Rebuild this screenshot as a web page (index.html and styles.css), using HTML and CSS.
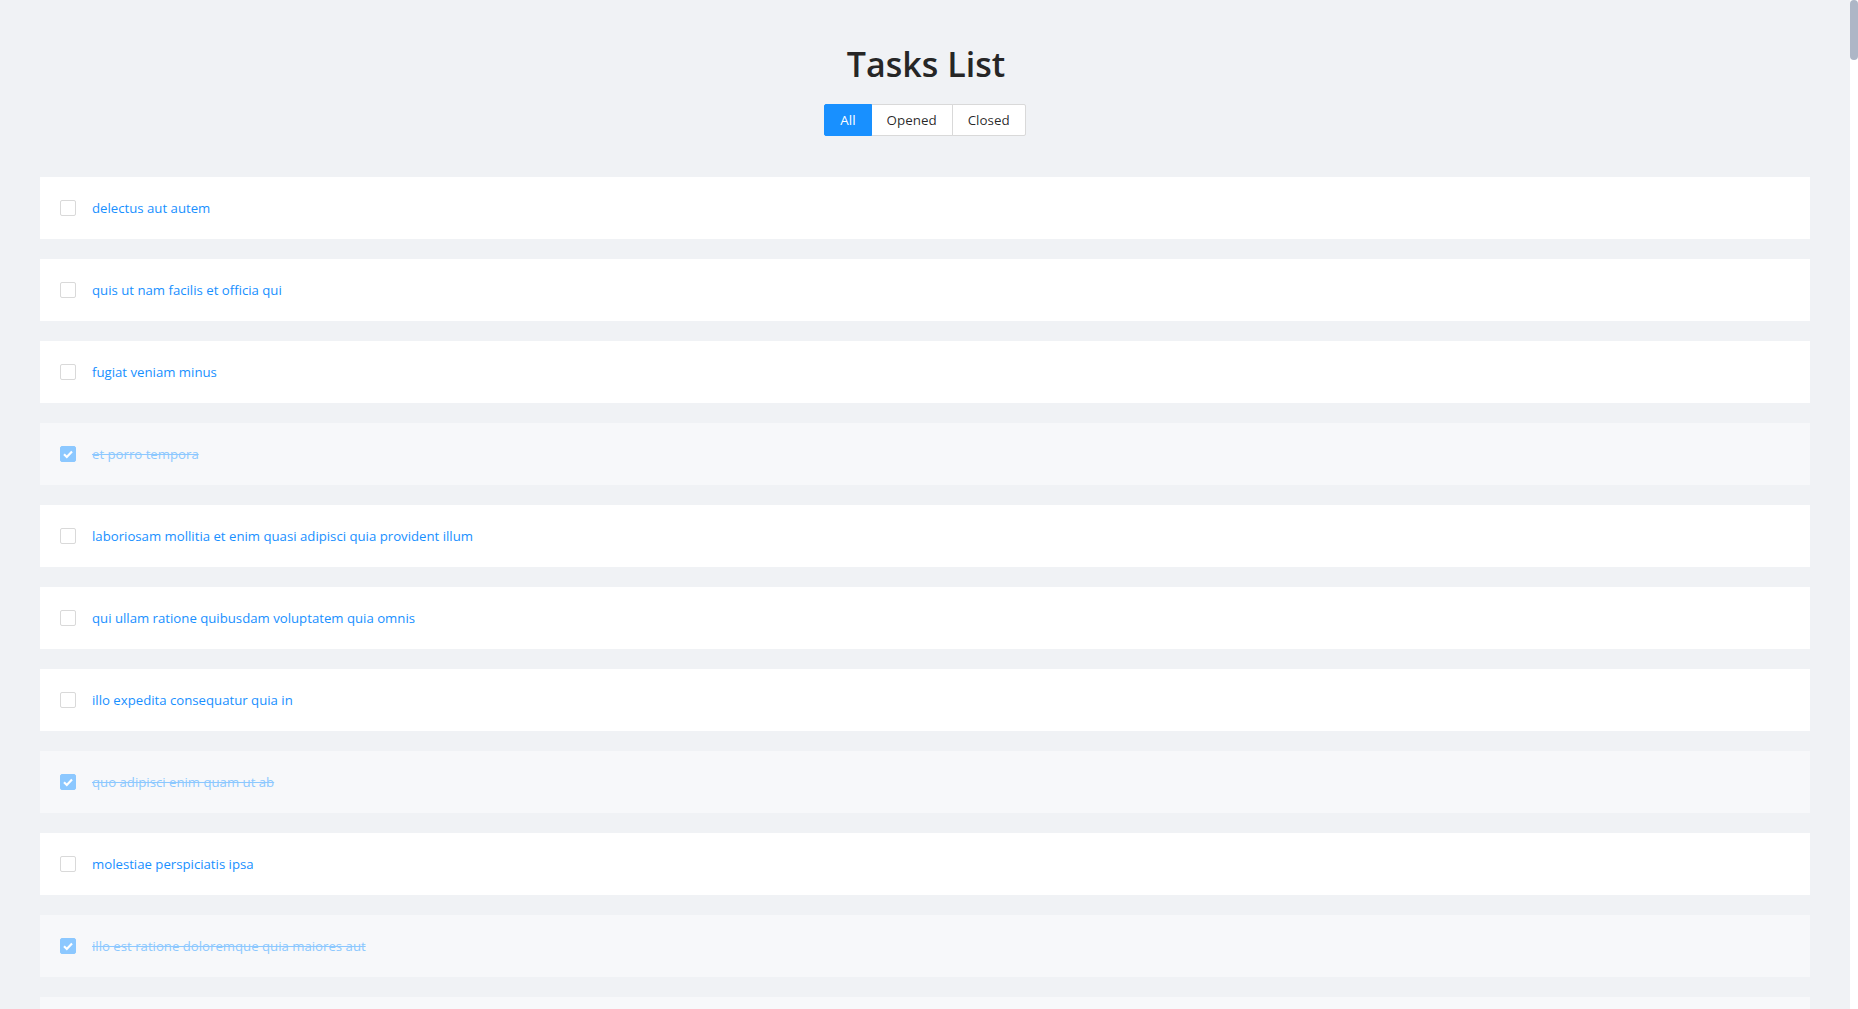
FILE: index.html
```html
<!DOCTYPE html>
<html lang="en">
<head>
<meta charset="utf-8">
<title>Tasks List</title>
<link rel="stylesheet" href="styles.css">
</head>
<body>
<div class="page">
  <header class="header">
    <h1 class="title">Tasks List</h1>
    <div class="filters">
      <button class="filter active">All</button>
      <button class="filter">Opened</button>
      <button class="filter">Closed</button>
    </div>
  </header>
  <ul class="tasks">
    <li class="task"><span class="box"></span><span class="label">delectus aut autem</span></li>
    <li class="task"><span class="box"></span><span class="label">quis ut nam facilis et officia qui</span></li>
    <li class="task"><span class="box"></span><span class="label">fugiat veniam minus</span></li>
    <li class="task done"><span class="box"><svg viewBox="0 0 16 16" width="16" height="16"><path d="M4 8.3 L6.8 11 L12 5.6" fill="none" stroke="#fff" stroke-width="2.2"/></svg></span><span class="label">et porro tempora</span></li>
    <li class="task"><span class="box"></span><span class="label">laboriosam mollitia et enim quasi adipisci quia provident illum</span></li>
    <li class="task"><span class="box"></span><span class="label">qui ullam ratione quibusdam voluptatem quia omnis</span></li>
    <li class="task"><span class="box"></span><span class="label">illo expedita consequatur quia in</span></li>
    <li class="task done"><span class="box"><svg viewBox="0 0 16 16" width="16" height="16"><path d="M4 8.3 L6.8 11 L12 5.6" fill="none" stroke="#fff" stroke-width="2.2"/></svg></span><span class="label">quo adipisci enim quam ut ab</span></li>
    <li class="task"><span class="box"></span><span class="label">molestiae perspiciatis ipsa</span></li>
    <li class="task done"><span class="box"><svg viewBox="0 0 16 16" width="16" height="16"><path d="M4 8.3 L6.8 11 L12 5.6" fill="none" stroke="#fff" stroke-width="2.2"/></svg></span><span class="label">illo est ratione doloremque quia maiores aut</span></li>
    <li class="task done"><span class="box"><svg viewBox="0 0 16 16" width="16" height="16"><path d="M4 8.3 L6.8 11 L12 5.6" fill="none" stroke="#fff" stroke-width="2.2"/></svg></span><span class="label">vero rerum temporibus dolor</span></li>
  </ul>
</div>
<div class="scrollbar"><div class="thumb"></div></div>
</body>
</html>
```
FILE: styles.css
```css
html, body { scrollbar-width: none; }
html::-webkit-scrollbar { display: none; }

body {
  margin: 0;
  background: #f0f2f5;
  font-family: "Open Sans", "Noto Sans", sans-serif;
  font-size: 13.2px;
  color: rgba(0,0,0,0.85);
}

.page {
  padding: 0 48px 40px 40px;
}

.header {
  display: flex;
  flex-direction: column;
  align-items: center;
  padding-top: 42px;
}

.title {
  margin: 0 0 0 2px;
  font-size: 34px;
  font-weight: 600;
  line-height: 44px;
  color: #262626;
}

.filters {
  display: flex;
  margin-top: 18px;
}

.filter {
  height: 32px;
  padding: 0 15px;
  border: 1px solid #d9d9d9;
  margin-left: -1px;
  background: #fff;
  font-family: inherit;
  font-size: 13.4px;
  color: rgba(0,0,0,0.85);
}
.filter:first-child { border-radius: 2px 0 0 2px; margin-left: 0; }
.filter:last-child { border-radius: 0 2px 2px 0; }
.filter.active {
  background: #1890ff;
  border-color: #1890ff;
  color: #fff;
  position: relative;
}

.tasks {
  list-style: none;
  margin: 41px 0 0;
  padding: 0;
  display: flex;
  flex-direction: column;
  gap: 20px;
}

.task {
  display: flex;
  align-items: center;
  gap: 16px;
  height: 62px;
  padding: 0 20px;
  background: #fff;
}

.task.done { background: #f7f8fa; }

.box {
  width: 16px;
  height: 16px;
  box-sizing: border-box;
  border: 1px solid #d9d9d9;
  border-radius: 2px;
  background: #fff;
  display: flex;
}
.done .box {
  background: #8cc8ff;
  border-color: #8cc8ff;
}
.done .box svg { margin: -1px; }

.label {
  color: #1890ff;
}
.done .label {
  color: #8cc8ff;
  text-decoration: line-through;
}

.scrollbar {
  position: fixed;
  top: 0;
  right: 0;
  width: 8px;
  height: 100%;
  background: #ffffff;
}
.thumb {
  width: 8px;
  height: 60px;
  border-radius: 4px;
  background: #aeb6c6;
}
```
